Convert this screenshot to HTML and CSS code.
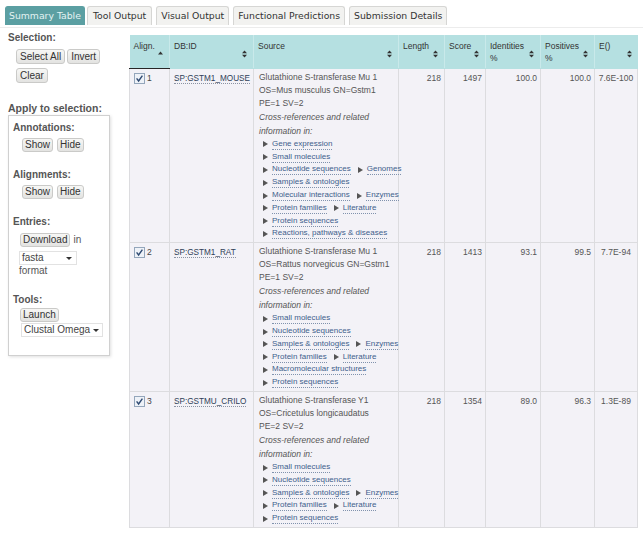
FILE: index.html
```html
<!DOCTYPE html>
<html>
<head>
<meta charset="utf-8">
<title>Summary Table</title>
<link rel="stylesheet" href="styles.css">
</head>
<body>
<div class="tabs">
  <span class="tab active">Summary Table</span>
  <span class="tab tool">Tool Output</span>
  <span class="tab">Visual Output</span>
  <span class="tab">Functional Predictions</span>
  <span class="tab">Submission Details</span>
</div>
<div class="main">
  <aside class="side">
    <div class="side-title">Selection:</div>
    <div class="btn-row sel-btns">
      <button class="btn">Select All</button>
      <button class="btn">Invert</button>
      <button class="btn">Clear</button>
    </div>
    <div class="side-title apply-title">Apply to selection:</div>
    <div class="apply-box">
      <div class="group-label">Annotations:</div>
      <div class="btn-row ind">
        <button class="btn sm">Show</button>
        <button class="btn sm">Hide</button>
      </div>
      <div class="group-label gap">Alignments:</div>
      <div class="btn-row ind">
        <button class="btn sm">Show</button>
        <button class="btn sm">Hide</button>
      </div>
      <div class="group-label gap">Entries:</div>
      <div class="btn-row ind2">
        <button class="btn sm">Download</button><span class="plain">in</span>
      </div>
      <div class="select sel-fasta"><span>fasta</span><span class="caret"></span></div>
      <div class="plain fmt">format</div>
      <div class="group-label gap">Tools:</div>
      <div class="btn-row ind2 tight">
        <button class="btn sm">Launch</button>
      </div>
      <div class="select sel-tool"><span>Clustal Omega</span><span class="caret"></span></div>
    </div>
  </aside>

  <table class="results">
    <colgroup>
      <col class="c-align"><col class="c-id"><col class="c-src"><col class="c-len"><col class="c-score"><col class="c-ident"><col class="c-pos"><col class="c-e">
    </colgroup>
    <thead>
      <tr>
        <th class="sorted"><div class="th-in"><span>Align.</span><svg class="sort" width="5" height="8" viewBox="0 0 5 8"><polygon points="0,4.5 2.5,1.5 5,4.5" fill="#333"/></svg></div></th>
        <th><div class="th-in"><span>DB:ID</span><svg class="sort" width="5" height="8" viewBox="0 0 5 8"><polygon points="0,3.3 2.5,0.5 5,3.3" fill="#333"/><polygon points="0,4.7 2.5,7.5 5,4.7" fill="#333"/></svg></div></th>
        <th><div class="th-in"><span>Source</span><svg class="sort" width="5" height="8" viewBox="0 0 5 8"><polygon points="0,3.3 2.5,0.5 5,3.3" fill="#333"/><polygon points="0,4.7 2.5,7.5 5,4.7" fill="#333"/></svg></div></th>
        <th><div class="th-in"><span>Length</span><svg class="sort" width="5" height="8" viewBox="0 0 5 8"><polygon points="0,3.3 2.5,0.5 5,3.3" fill="#333"/><polygon points="0,4.7 2.5,7.5 5,4.7" fill="#333"/></svg></div></th>
        <th><div class="th-in"><span>Score</span><svg class="sort" width="5" height="8" viewBox="0 0 5 8"><polygon points="0,3.3 2.5,0.5 5,3.3" fill="#333"/><polygon points="0,4.7 2.5,7.5 5,4.7" fill="#333"/></svg></div></th>
        <th><div class="th-in"><span>Identities<br>%</span><svg class="sort" width="5" height="8" viewBox="0 0 5 8"><polygon points="0,3.3 2.5,0.5 5,3.3" fill="#333"/><polygon points="0,4.7 2.5,7.5 5,4.7" fill="#333"/></svg></div></th>
        <th><div class="th-in"><span>Positives<br>%</span><svg class="sort" width="5" height="8" viewBox="0 0 5 8"><polygon points="0,3.3 2.5,0.5 5,3.3" fill="#333"/><polygon points="0,4.7 2.5,7.5 5,4.7" fill="#333"/></svg></div></th>
        <th><div class="th-in"><span>E()</span><svg class="sort" width="5" height="8" viewBox="0 0 5 8"><polygon points="0,3.3 2.5,0.5 5,3.3" fill="#333"/><polygon points="0,4.7 2.5,7.5 5,4.7" fill="#333"/></svg></div></th>
      </tr>
    </thead>
    <tbody>
      <tr>
        <td class="al"><span class="chk"><svg width="11" height="11" viewBox="0 0 11 11"><rect x="0.5" y="0.5" width="10" height="10" fill="#eef2f8" stroke="#94a6bb"/><path d="M2.6 5.4 L4.6 8 L8.4 2.6" fill="none" stroke="#2f4a72" stroke-width="1.4"/></svg>1</span></td>
        <td class="id"><a class="idlink">SP:GSTM1_MOUSE</a></td>
        <td class="src">
          <div class="desc">Glutathione S-transferase Mu 1<br>OS=Mus musculus GN=Gstm1<br>PE=1 SV=2</div>
          <div class="xtitle">Cross-references and related<br>information in:</div>
          <div class="xrefs">
            <div class="xl"><span class="tri"></span><a>Gene expression</a></div>
            <div class="xl"><span class="tri"></span><a>Small molecules</a></div>
            <div class="xl"><span class="tri"></span><a>Nucleotide sequences</a><span class="tri"></span><a>Genomes</a></div>
            <div class="xl"><span class="tri"></span><a>Samples &amp; ontologies</a></div>
            <div class="xl"><span class="tri"></span><a>Molecular interactions</a><span class="tri"></span><a>Enzymes</a></div>
            <div class="xl"><span class="tri"></span><a>Protein families</a><span class="tri"></span><a>Literature</a></div>
            <div class="xl"><span class="tri"></span><a>Protein sequences</a></div>
            <div class="xl"><span class="tri"></span><a>Reactions, pathways &amp; diseases</a></div>
          </div>
        </td>
        <td class="num">218</td>
        <td class="num">1497</td>
        <td class="num">100.0</td>
        <td class="num">100.0</td>
        <td class="ev">7.6E-100</td>
      </tr>
      <tr>
        <td class="al"><span class="chk"><svg width="11" height="11" viewBox="0 0 11 11"><rect x="0.5" y="0.5" width="10" height="10" fill="#eef2f8" stroke="#94a6bb"/><path d="M2.6 5.4 L4.6 8 L8.4 2.6" fill="none" stroke="#2f4a72" stroke-width="1.4"/></svg>2</span></td>
        <td class="id"><a class="idlink">SP:GSTM1_RAT</a></td>
        <td class="src">
          <div class="desc">Glutathione S-transferase Mu 1<br>OS=Rattus norvegicus GN=Gstm1<br>PE=1 SV=2</div>
          <div class="xtitle">Cross-references and related<br>information in:</div>
          <div class="xrefs">
            <div class="xl"><span class="tri"></span><a>Small molecules</a></div>
            <div class="xl"><span class="tri"></span><a>Nucleotide sequences</a></div>
            <div class="xl"><span class="tri"></span><a>Samples &amp; ontologies</a><span class="tri"></span><a>Enzymes</a></div>
            <div class="xl"><span class="tri"></span><a>Protein families</a><span class="tri"></span><a>Literature</a></div>
            <div class="xl"><span class="tri"></span><a>Macromolecular structures</a></div>
            <div class="xl"><span class="tri"></span><a>Protein sequences</a></div>
          </div>
        </td>
        <td class="num">218</td>
        <td class="num">1413</td>
        <td class="num">93.1</td>
        <td class="num">99.5</td>
        <td class="ev">7.7E-94</td>
      </tr>
      <tr>
        <td class="al"><span class="chk"><svg width="11" height="11" viewBox="0 0 11 11"><rect x="0.5" y="0.5" width="10" height="10" fill="#eef2f8" stroke="#94a6bb"/><path d="M2.6 5.4 L4.6 8 L8.4 2.6" fill="none" stroke="#2f4a72" stroke-width="1.4"/></svg>3</span></td>
        <td class="id"><a class="idlink">SP:GSTMU_CRILO</a></td>
        <td class="src">
          <div class="desc">Glutathione S-transferase Y1<br>OS=Cricetulus longicaudatus<br>PE=2 SV=2</div>
          <div class="xtitle">Cross-references and related<br>information in:</div>
          <div class="xrefs">
            <div class="xl"><span class="tri"></span><a>Small molecules</a></div>
            <div class="xl"><span class="tri"></span><a>Nucleotide sequences</a></div>
            <div class="xl"><span class="tri"></span><a>Samples &amp; ontologies</a><span class="tri"></span><a>Enzymes</a></div>
            <div class="xl"><span class="tri"></span><a>Protein families</a><span class="tri"></span><a>Literature</a></div>
            <div class="xl"><span class="tri"></span><a>Protein sequences</a></div>
          </div>
        </td>
        <td class="num">218</td>
        <td class="num">1354</td>
        <td class="num">89.0</td>
        <td class="num">96.3</td>
        <td class="ev">1.3E-89</td>
      </tr>
    </tbody>
  </table>
</div>
</body>
</html>
```
FILE: styles.css
```css
html, body {
  margin: 0;
  padding: 0;
  background: #ffffff;
}
body {
  font-family: "Liberation Sans", Arial, sans-serif;
  color: #555;
}

/* Tabs */
.tabs {
  display: flex;
  gap: 4px;
  padding: 6px 0 2px 5px;
  border-bottom: 1px solid #ececec;
}
.tab {
  box-sizing: border-box;
  height: 19px;
  padding: 0 4px;
  font: 9.3px/17px "DejaVu Sans", Verdana, sans-serif;
  color: #333;
  background: #f2f2f0;
  border: 1px solid #d6d6d4;
  border-bottom: none;
  border-radius: 3px 3px 0 0;
  white-space: nowrap;
}
.tab.active {
  padding: 0 3px;
  background: #5b9fa2;
  border-color: #5b9fa2;
  color: #e4f3f3;
  margin-right: -2px;
}
.tab.tool {
  padding: 0 5px;
}

/* Layout */
.main {
  display: flex;
  align-items: flex-start;
  gap: 19px;
  padding-left: 8px;
}

/* Side panel */
.side {
  width: 102px;
  flex: none;
  padding-top: 4px;
}
.side-title {
  font: bold 10px/12px "Liberation Sans", Arial, sans-serif;
  color: #555;
}
.apply-title {
  margin-top: 19px;
  font-size: 10.5px;
}
.btn-row {
  display: flex;
  flex-wrap: wrap;
  align-items: center;
  gap: 4px 2px;
}
.sel-btns {
  margin: 5px 0 0 8px;
  width: 94px;
}
.btn {
  box-sizing: border-box;
  height: 15px;
  margin: 0;
  padding: 0 3px;
  font: 10px/13px "Liberation Sans", Arial, sans-serif;
  color: #333;
  background: linear-gradient(#f7f7f5, #e3e3e1);
  border: 1px solid #cacac8;
  border-radius: 3px;
  white-space: nowrap;
}
.btn.sm {
  height: 14px;
  line-height: 12px;
  padding: 0 2px;
}
.apply-box {
  box-sizing: border-box;
  margin-top: 1px;
  width: 102px;
  height: 241px;
  padding: 6px 4px;
  border: 1px solid #d0d0d0;
  box-shadow: 1px 1px 3px rgba(0, 0, 0, 0.13);
}
.group-label {
  font: bold 10px/12px "Liberation Sans", Arial, sans-serif;
  color: #555;
}
.group-label.gap {
  margin-top: 17px;
}
.ind {
  margin: 4px 0 0 9px;
  gap: 4px;
}
.ind2 {
  margin: 5px 0 0 7px;
  gap: 3px;
}
.ind2.tight {
  margin-top: 2px;
}
.plain {
  font: 10px/12px "Liberation Sans", Arial, sans-serif;
  color: #555;
}
.select {
  box-sizing: border-box;
  display: flex;
  align-items: center;
  justify-content: space-between;
  gap: 3px;
  height: 14px;
  padding: 0 4px 0 2px;
  font: 10px/12px "Liberation Sans", Arial, sans-serif;
  color: #444;
  background: #fff;
  border: 1px solid #e2e2e2;
  white-space: nowrap;
  overflow: hidden;
}
.sel-fasta {
  width: 58px;
  margin: 4px 0 0 6px;
}
.sel-tool {
  width: 82px;
  margin: 1px 0 0 8px;
}
.caret {
  flex: none;
  width: 0;
  height: 0;
  border-left: 3px solid transparent;
  border-right: 3px solid transparent;
  border-top: 3px solid #333;
}
.fmt {
  margin-left: 6px;
}

/* Table */
.results {
  flex: none;
  margin-top: 7px;
  width: 508px;
  table-layout: fixed;
  border-collapse: collapse;
  font-size: 8.5px;
}
.c-align { width: 40px; }
.c-id { width: 84px; }
.c-src { width: 145px; }
.c-len { width: 46px; }
.c-score { width: 41px; }
.c-ident { width: 55px; }
.c-pos { width: 54px; }
.c-e { width: 43px; }

.results th {
  box-sizing: border-box;
  height: 33px;
  padding: 5px 6px 4px 4px;
  background: #b5e0e1;
  border-left: 1px solid #c9e9ea;
  border-bottom: 1px solid #b5e0e1;
  font: normal 8.5px/12px "Liberation Sans", Arial, sans-serif;
  color: #333;
  text-align: left;
  vertical-align: top;
}
.results th:first-child {
  border-left: none;
}
.results th.sorted {
  border-bottom: 1px solid #262626;
}
.th-in {
  display: flex;
  justify-content: space-between;
  align-items: flex-start;
  height: 24px;
}
.sort {
  align-self: center;
  flex: none;
  margin-top: 3px;
}

.results td {
  padding: 2px 3px 2px 4px;
  background: #f3f2f7;
  border: 1px solid #dcdcdf;
  vertical-align: top;
  font: 8.5px/13px "Liberation Sans", Arial, sans-serif;
  color: #555;
}
.results td.al, .results td.id, .results td.num, .results td.ev {
  padding-top: 3px;
}
.results td.src {
  padding-left: 5px;
}
.chk {
  display: flex;
  align-items: center;
  gap: 2px;
  color: #444;
}
.idlink {
  font-size: 8.2px;
  color: #2f3f58;
  text-decoration: none;
  border-bottom: 1px dotted #8b93a3;
}
.desc {
  line-height: 13px;
}
.xtitle {
  margin-top: 1px;
  font-style: italic;
  line-height: 13.5px;
  color: #555;
}
.xrefs {
  padding-left: 4px;
}
.xl {
  display: flex;
  align-items: center;
  height: 12.8px;
  font-size: 8px;
  line-height: 10px;
  white-space: nowrap;
}
.xl a {
  color: #40608c;
  text-decoration: none;
  border-bottom: 1px dotted #8092ad;
  margin-right: 7px;
}
.tri {
  flex: none;
  width: 0;
  height: 0;
  border-left: 5px solid #555;
  border-top: 3px solid transparent;
  border-bottom: 3px solid transparent;
  margin-right: 4px;
}
.results td.num {
  text-align: right;
  padding-right: 3px;
}
.results td.ev {
  text-align: center;
  padding-left: 1px;
  padding-right: 1px;
}
```
